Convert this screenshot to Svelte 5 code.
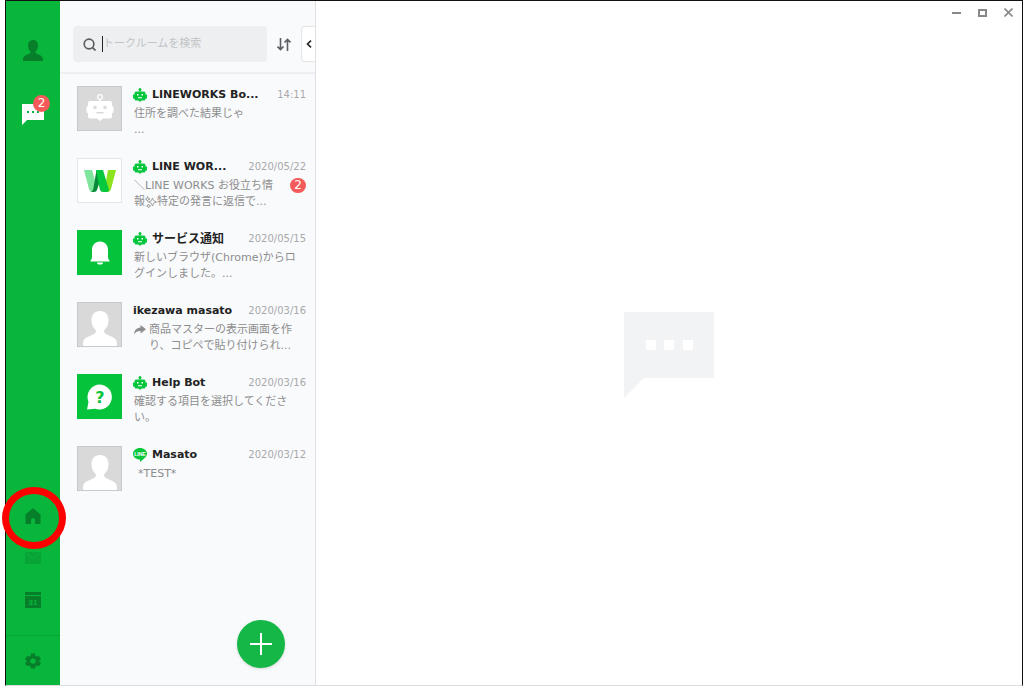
<script lang="ts">
  type Room = {
    avatar: 'bot' | 'works' | 'bell' | 'person' | 'help';
    mark?: 'bot' | 'line';
    title: string;
    time: string;
    lines: string[];
    unread?: number;
    forwarded?: boolean;
    indent?: boolean;
    japanese?: boolean;
  };

  let query = $state('');

  const rooms: Room[] = [
    { avatar: 'bot', mark: 'bot', title: 'LINEWORKS Bo...', time: '14:11', lines: ['住所を調べた結果じゃ', '...'] },
    { avatar: 'works', mark: 'bot', title: 'LINE WOR...', time: '2020/05/22', lines: ['＼LINE WORKS お役立ち情', '報✨特定の発言に返信で...'], unread: 2 },
    { avatar: 'bell', mark: 'bot', title: 'サービス通知', time: '2020/05/15', lines: ['新しいブラウザ(Chrome)からロ', 'グインしました。...'], japanese: true },
    { avatar: 'person', title: 'ikezawa masato', time: '2020/03/16', lines: ['商品マスターの表示画面を作', 'り、コピペで貼り付けられ...'], forwarded: true },
    { avatar: 'help', mark: 'bot', title: 'Help Bot', time: '2020/03/16', lines: ['確認する項目を選択してくださ', 'い。'] },
    { avatar: 'person', mark: 'line', title: 'Masato', time: '2020/03/12', lines: ['*TEST*'], indent: true },
  ];
</script>

<div class="window">
  <nav class="sidebar">
    <div class="nav-top">
      <button class="nav-main" aria-label="連絡先">
        <svg width="20" height="21" viewBox="0 0 20 21" fill="#077f2a">
          <path d="M10 0c3.200 0 5 2.300 5 5.400 0 2.600-.9 4.800-2.500 6v1.600c1.200 1.300 7.500 2.200 7.500 6V21H0v-2c0-3.800 6.300-4.700 7.500-6v-1.600C5.900 10.200 5 8 5 5.400 5 2.300 6.800 0 10 0z" />
        </svg>
      </button>
      <button class="nav-main" aria-label="トーク">
        <svg width="22" height="22" viewBox="0 0 22 22">
          <path d="M0 1h22v16H5l-5 5z" fill="#fff" />
          <path d="M5 8h2v2H5zm5 0h2v2h-2zm5 0h2v2h-2z" fill="#09b63c" />
        </svg>
        <span class="badge nav-badge">2</span>
      </button>
    </div>
    <div class="nav-apps">
      <button class="nav-app" aria-label="ホーム">
        <svg width="16" height="16" viewBox="0 0 16 16" fill="#077f2a">
          <path d="M8 0l7.500 6.500V16H10v-4a2 2 0 0 0-4 0v4H.5V6.500z" />
        </svg>
        <span class="ring"></span>
      </button>
      <button class="nav-app" aria-label="メール">
        <svg width="16" height="12" viewBox="0 0 16 12">
          <path d="M0 0h16v12H0z" fill="#08a436" />
          <path d="M1 1l7 6 7-6" fill="none" stroke="#09b63c" />
        </svg>
      </button>
      <button class="nav-app" aria-label="カレンダー">
        <svg width="16" height="16" viewBox="0 0 16 16">
          <path d="M0 0h16v3H0zM0 4h16v12H0z" fill="#077f2a" />
          <text x="8" y="13" text-anchor="middle" font-size="8" font-weight="700" font-family="Liberation Sans, sans-serif" fill="#09b63c">31</text>
        </svg>
      </button>
    </div>
    <button class="nav-settings" aria-label="設定">
      <svg width="16" height="16" viewBox="0 0 16 16" fill="#077f2a">
        <path fill-rule="evenodd" d="M6 .5h4l.5 2.300 1.300.8L14 2.900l2 3.400-1.700 1.500v.9L16 10l-2 3.300-2.200-.7-1.300.8-.5 2.200H6l-.5-2.200-1.300-.8-2.200.7L0 10l1.700-1.400v-.9L0 6.300l2-3.400 2.200.7 1.300-.8zM8 5.400a2.700 2.700 0 1 0 0 5.400 2.700 2.700 0 0 0 0-5.400z" />
      </svg>
    </button>
  </nav>

  <section class="panel">
    <header class="panel-head">
      <label class="search">
        <svg width="13" height="13" viewBox="0 0 14 14" fill="none" stroke="#5c5e63" stroke-width="1.800">
          <circle cx="6.500" cy="6.500" r="5.200" />
          <path d="M10 10l3.500 3.500" />
        </svg>
        <span class="caret"></span>
        <input type="text" bind:value={query} placeholder="トークルームを検索" aria-label="トークルームを検索" />
      </label>
      <button class="sort" aria-label="並べ替え">
        <svg width="14" height="13" viewBox="0 0 14 13" fill="none" stroke="#5c5e63" stroke-width="1.600">
          <path d="M3.500 0v11.500M.5 8.500l3 3 3-3M10.500 13V1.500M7.500 4.500l3-3 3 3" />
        </svg>
      </button>
      <button class="fold" aria-label="閉じる">
        <svg width="6" height="8" viewBox="0 0 6 8" fill="none" stroke="#222" stroke-width="1.600">
          <path d="M5 .6L1.500 4 5 7.400" />
        </svg>
      </button>
    </header>

    <ul class="rooms">
      {#each rooms as room}
        <li>
          <button class="room">
            <span class="avatar {room.avatar}">
              {#if room.avatar === 'bot'}
                <svg width="43" height="43" viewBox="0 0 43 43">
                  <circle cx="22" cy="10" r="2.300" fill="none" stroke="#fff" stroke-width="1.300" />
                  <path d="M21.300 12h1.400v2H32q2 0 2 2v3q1.500 0 1.500 1.500v4q0 1.500-1.500 1.500v3.500q0 2-2 2h-7l-3 2.500-3-2.500h-7q-2 0-2-2V26q-1.500 0-1.500-1.500v-4Q8.500 19 10 19v-3q0-2 2-2h9.300z" fill="#fff" />
                  <path d="M15.500 19h3v3h-3zM25.500 19h3v3h-3zM18.500 25h7v1.500h-7z" fill="#d9d9d9" />
                </svg>
              {:else if room.avatar === 'works'}
                <svg width="43" height="43" viewBox="0 0 43 43">
                  <path d="M6 11h8l4 14-2 8h-2q-2 0-3-3z" fill="#7ee69c" />
                  <path d="M30 11h8l-5 19q-1 3-3 3h-4z" fill="#8ae31d" />
                  <path d="M18.500 11L22 22l-3 9q-.8 2-3 2h-4q2.500 0 3.300-3z" fill="#078a38" />
                  <path d="M18 11h7l6 20q-.5 2-2 2h-4q-2.500 0-3.300-3z" fill="#06c83e" />
                </svg>
              {:else if room.avatar === 'bell'}
                <svg width="43" height="43" viewBox="0 0 43 43" fill="#fff">
                  <path d="M22 10.500c5 0 8 3.600 8 8.500v7q0 2 1.500 3.500v1h-19v-1Q14 28 14 26v-7c0-4.900 3-8.500 8-8.500zM19 31.500h6a3 2 0 0 1-6 0z" />
                </svg>
              {:else if room.avatar === 'person'}
                <svg width="43" height="43" viewBox="0 0 43 43" fill="#fff">
                  <path d="M22 8c5.500 0 8.500 3.800 8.500 9.200 0 4.500-1.500 7.800-4.300 9.800v2.500C28 32.500 39 33.500 39 40v3H5v-3c0-6.500 11-7.500 12.800-10.500V27c-2.800-2-4.300-5.300-4.300-9.800C13.500 11.800 16.500 8 22 8z" />
                </svg>
              {:else}
                <svg width="43" height="43" viewBox="0 0 43 43">
                  <path d="M22 9.500a12.500 12.500 0 1 1-5 24.200L9 34.500l1.500-7.500A12.500 12.500 0 0 1 22 9.500z" fill="#fff" />
                  <text x="22" y="28" text-anchor="middle" font-size="16" font-weight="700" font-family="DejaVu Sans, sans-serif" fill="#05c43c">?</text>
                </svg>
              {/if}
            </span>
            <span class="body">
              <span class="title-row">
                {#if room.mark === 'bot'}
                  <svg class="mark" width="14" height="14" viewBox="0 0 14 14">
                    <circle cx="7" cy="1.500" r="1.500" fill="#06c73b" />
                    <path d="M6.500 2h1v1.500H11q1.500 0 1.500 1.500v1.500H14v4h-1.500V11q0 1.500-1.500 1.500H8.500L7 14l-1.500-1.500H3q-1.500 0-1.500-1.500v-.5H0v-4h1.500V5q0-1.500 1.500-1.500h3.500z" fill="#06c73b" />
                    <path d="M4 6h1.500v1.500H4zM8.500 6H10v1.500H8.500zM5 9.300h4v1H5z" fill="#fff" />
                  </svg>
                {:else if room.mark === 'line'}
                  <svg class="mark" width="14" height="14" viewBox="0 0 14 14">
                    <path d="M7 0c4 0 7 2.500 7 5.800 0 3.200-4.500 6.200-7 8.200v-2.400c-4 0-7-2.500-7-5.800S3 0 7 0z" fill="#06c73b" />
                    <text x="7" y="7.800" text-anchor="middle" font-size="5" font-weight="700" font-family="Liberation Sans, sans-serif" fill="#fff">LINE</text>
                  </svg>
                {/if}
                <span class="title" class:japanese={room.japanese}>{room.title}</span>
                <span class="time">{room.time}</span>
              </span>
              <span class="message-row" class:indent={room.indent}>
                {#if room.forwarded}
                  <svg class="forward" width="12" height="10" viewBox="0 0 12 10" fill="#8d8d8d">
                    <path d="M6.500 0L12 4.200 6.500 8.400V6C3.500 5.800 1.500 7 0 9.500.3 5.500 2.500 2.800 6.500 2.500z" />
                  </svg>
                {/if}
                <span class="message">
                  {#each room.lines as line}
                    <span class="line">
                      {#if line.includes('✨')}
                        {line.split('✨')[0]}<svg class="sparkle" width="12" height="12" viewBox="0 0 12 12" fill="none" stroke="#8d8d8d" stroke-width=".8">
                          <path d="M7.500 2l1.200 2.800L11.500 6 8.700 7.200 7.500 10 6.300 7.200 3.500 6l2.800-1.200zM2.500.5l.7 1.800 1.800.7-1.800.7-.7 1.800-.7-1.800L.5 3l1.300-.7zM3.500 8l.6 1.400 1.400.6-1.400.6-.6 1.200-.6-1.200L1.500 10l1.400-.6z" />
                        </svg>{line.split('✨')[1]}
                      {:else}
                        {line}
                      {/if}
                    </span>
                  {/each}
                </span>
                {#if room.unread}
                  <span class="badge">{room.unread}</span>
                {/if}
              </span>
            </span>
          </button>
        </li>
      {/each}
    </ul>

    <button class="add" aria-label="新規トーク">
      <svg width="22" height="22" viewBox="0 0 22 22" fill="#fff">
        <path d="M10 0h2v10h10v2H12v10h-2V12H0v-2h10z" />
      </svg>
    </button>
  </section>

  <main class="content">
    <div class="controls">
      <button aria-label="最小化">
        <svg width="9" height="9" viewBox="0 0 9 9" stroke="#888" stroke-width="2"><path d="M0 5h9" /></svg>
      </button>
      <button aria-label="最大化">
        <svg width="9" height="9" viewBox="0 0 9 9" fill="none" stroke="#888" stroke-width="2"><path d="M1 2h7v6H1z" /></svg>
      </button>
      <button aria-label="閉じる">
        <svg width="9" height="9" viewBox="0 0 9 9" stroke="#888" stroke-width="1.600"><path d="M.5.5l8 8M8.500.5l-8 8" /></svg>
      </button>
    </div>
    <div class="empty">
      <svg width="90" height="86" viewBox="0 0 90 86">
        <path d="M0 0h90v66H20L0 86z" fill="#f2f3f5" />
        <path d="M22 28h10v10H22zM40 28h10v10H40zM59 28h10v10H59z" fill="#fff" />
      </svg>
    </div>
  </main>
</div>

<style>
:global(body) {
  margin: 0;
  background: #fff;
}
button {
  padding: 0;
  border: none;
  background: none;
  font: inherit;
  color: inherit;
  cursor: pointer;
}
svg {
  display: block;
  flex: none;
}
.window {
  display: flex;
  box-sizing: border-box;
  min-height: 100vh;
  margin-left: 5px;
  border: 1px solid #111;
  border-bottom-color: #dcdde0;
  background: #fff;
  font-family: 'DejaVu Sans', 'Noto Sans CJK JP', sans-serif;
  font-size: 11px;
  line-height: 16px;
}

.sidebar {
  display: flex;
  flex-direction: column;
  flex: none;
  width: 54px;
  background: #09b63c;
}
.nav-top,
.nav-apps {
  display: flex;
  flex-direction: column;
}
.nav-top {
  padding-top: 18px;
}
.nav-apps {
  margin-top: auto;
  padding-bottom: 14px;
}
.nav-main,
.nav-app,
.nav-settings {
  position: relative;
  display: flex;
  align-items: center;
  justify-content: center;
}
.nav-main {
  height: 63px;
}
.nav-app {
  height: 42px;
}
.nav-settings {
  height: 50px;
  border-top: 1px solid #08a436;
}
.badge {
  flex: none;
  box-sizing: border-box;
  width: 16px;
  height: 15px;
  border-radius: 8px;
  background: #f55a5a;
  color: #fff;
  font-size: 12px;
  line-height: 15px;
  text-align: center;
}
.nav-badge {
  position: absolute;
  top: 13px;
  left: 27px;
  width: 17px;
  height: 17px;
  border-radius: 50%;
  line-height: 17px;
}
.ring {
  position: absolute;
  top: -8px;
  left: -4px;
  z-index: 2;
  box-sizing: border-box;
  width: 64px;
  height: 62px;
  border: 7px solid #fe0000;
  border-radius: 50%;
  pointer-events: none;
}

.panel {
  position: relative;
  flex: none;
  width: 255px;
  border-right: 1px solid #dfe0e3;
  background: #f9fafc;
}
.panel-head {
  display: flex;
  align-items: center;
  padding: 25px 0 10px 13px;
  border-bottom: 2px solid #eeeff2;
}
.search {
  display: flex;
  align-items: center;
  flex: 1;
  box-sizing: border-box;
  min-width: 0;
  height: 36px;
  padding-left: 10px;
  border-radius: 4px;
  background: #eeeff1;
}
.caret {
  flex: none;
  width: 1px;
  height: 16px;
  margin-left: 6px;
  background: #222;
}
.search input {
  flex: 1;
  min-width: 0;
  padding: 0;
  border: none;
  outline: none;
  background: none;
  color: #222;
  font: inherit;
}
.search input::placeholder {
  color: #c2c3c6;
  opacity: 1;
}
.sort {
  display: flex;
  justify-content: center;
  width: 34px;
}
.fold {
  display: flex;
  align-items: center;
  justify-content: center;
  box-sizing: border-box;
  width: 14px;
  height: 36px;
  border: 1px solid #e4e5e8;
  border-right: none;
  border-radius: 4px 0 0 4px;
  background: #fff;
}

.rooms {
  margin: 0;
  padding: 12px 0 0;
  list-style: none;
}
.room {
  display: flex;
  align-items: flex-start;
  gap: 11px;
  box-sizing: border-box;
  width: 100%;
  height: 72px;
  padding: 0 9px 0 17px;
  text-align: left;
}
.avatar {
  flex: none;
  box-sizing: border-box;
  width: 45px;
  height: 45px;
  border: 1px solid #c9c9c9;
  background: #d9d9d9;
}
.avatar.works {
  border-color: #e6e6e6;
  background: #fff;
}
.avatar.bell,
.avatar.help {
  border-color: #05c43c;
  background: #05c43c;
}
.body {
  display: flex;
  flex-direction: column;
  gap: 3px;
  flex: 1;
  min-width: 0;
  padding-top: 1px;
}
.title-row {
  display: flex;
  align-items: center;
  height: 16px;
}
.mark {
  margin-right: 5px;
}
.title {
  color: #222;
  font-weight: 700;
  white-space: nowrap;
}
.title.japanese {
  font-size: 12px;
}
.time {
  margin-left: auto;
  color: #a9a9ab;
  font-size: 10px;
}
.message-row {
  display: flex;
  align-items: flex-start;
  padding-left: 1px;
  color: #8d8d8d;
}
.message-row.indent {
  padding-left: 5px;
}
.message {
  flex: 1;
  min-width: 0;
}
.line {
  display: block;
  white-space: nowrap;
}
.forward {
  margin: 3px 3px 0 0;
}
.sparkle {
  display: inline-block;
  vertical-align: middle;
}
.add {
  position: absolute;
  right: 30px;
  bottom: 17px;
  display: flex;
  align-items: center;
  justify-content: center;
  width: 48px;
  height: 48px;
  border-radius: 50%;
  background: #15b846;
  box-shadow: 0 1px 3px rgba(0, 0, 0, 0.15);
}

.content {
  display: flex;
  flex-direction: column;
  flex: 1;
  min-width: 0;
}
.controls {
  display: flex;
  justify-content: flex-end;
  gap: 17px;
  height: 23px;
  padding-right: 9px;
}
.controls button {
  display: flex;
  align-items: center;
}
.empty {
  display: flex;
  align-items: center;
  justify-content: center;
  flex: 1;
}
</style>
